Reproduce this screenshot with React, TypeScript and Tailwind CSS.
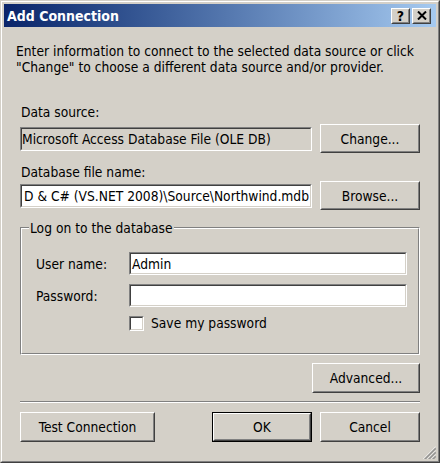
import React from "react";

const FONT = "font-['DejaVu_Sans_Condensed','DejaVu_Sans',sans-serif]";

function Raised({ className = "", children, isDefault = false }: { className?: string; children?: React.ReactNode; isDefault?: boolean }) {
  const inner = (
    <div className="h-full w-full border border-t-white border-l-white border-b-[#404040] border-r-[#404040]">
      <div className="h-full w-full border border-t-[#d4d0c8] border-l-[#d4d0c8] border-b-[#808080] border-r-[#808080] flex items-center justify-center">
        {children}
      </div>
    </div>
  );
  if (isDefault) {
    return <div className={`border border-black ${className}`}>{inner}</div>;
  }
  return <div className={className}>{inner}</div>;
}

function Sunken({ className = "", innerClass = "bg-white", children }: { className?: string; innerClass?: string; children?: React.ReactNode }) {
  return (
    <div className={`border border-t-[#808080] border-l-[#808080] border-b-white border-r-white ${className}`}>
      <div className={`h-full w-full border border-t-[#404040] border-l-[#404040] border-b-[#d4d0c8] border-r-[#d4d0c8] overflow-hidden flex items-center ${innerClass}`}>
        {children}
      </div>
    </div>
  );
}

function Grip() {
  return (
    <svg className="absolute right-0 bottom-0" width="13" height="13" viewBox="0 0 13 13">
      {[0, 4, 8].map((k) => (
        <g key={k}>
          <line x1={13} y1={k + 0.5} x2={k + 0.5} y2={13} stroke="#ffffff" strokeWidth="1" />
          <line x1={13} y1={k + 1.5} x2={k + 1.5} y2={13} stroke="#808080" strokeWidth="1" />
          <line x1={13} y1={k + 2.5} x2={k + 2.5} y2={13} stroke="#808080" strokeWidth="1" />
        </g>
      ))}
    </svg>
  );
}

export default function App() {
  return (
    <div className={`w-[440px] h-[463px] bg-[#d4d0c8] border border-t-[#d4d0c8] border-l-[#d4d0c8] border-b-[#404040] border-r-[#404040] ${FONT} text-[13.7px] leading-[16px] text-black`}>
      <div className="h-full border border-t-white border-l-white border-b-[#808080] border-r-[#808080] p-[2px] flex flex-col">
        {/* Title bar */}
        <div className="h-[23px] flex items-center justify-between pl-[3px] pr-[5px] bg-gradient-to-r from-[#0a246a] to-[#a6caf0]">
          <span className="text-white font-bold text-[14px] leading-[16px]">Add Connection</span>
          <div className="flex gap-[2px]">
            <Raised className="w-[19px] h-[16px] bg-[#d4d0c8]">
              <span className="font-bold text-[14px] leading-[12px] text-black">?</span>
            </Raised>
            <Raised className="w-[19px] h-[16px] bg-[#d4d0c8]">
              <svg width="10" height="9" viewBox="0 0 10 9">
                <path d="M1 0.5 L9 8.5 M9 0.5 L1 8.5" stroke="#000" strokeWidth="2" />
              </svg>
            </Raised>
          </div>
        </div>

        {/* Content */}
        <div className="relative flex-1 flex flex-col px-[16px]">
          <p className="mt-[16px] -ml-[4px] whitespace-nowrap">
            Enter information to connect to the selected data source or click
            <br />
            "Change" to choose a different data source and/or provider.
          </p>

          <div className="mt-[29px] ml-[1px]">Data source:</div>
          <div className="mt-[4px] flex items-center gap-[8px]">
            <Sunken className="w-[292px] h-[24px]" innerClass="bg-[#d4d0c8]">
              <span className="whitespace-nowrap">Microsoft Access Database File (OLE DB)</span>
            </Sunken>
            <Raised className="w-[100px] h-[29px]">Change...</Raised>
          </div>

          <div className="mt-[11px] ml-[1px]">Database file name:</div>
          <div className="mt-[1px] flex items-center gap-[8px]">
            <Sunken className="w-[292px] h-[24px]" innerClass="bg-white justify-end pr-[1px]">
              <span className="whitespace-nowrap">D &amp; C# (VS.NET 2008)\Source\Northwind.mdb</span>
            </Sunken>
            <Raised className="w-[100px] h-[29px]">Browse...</Raised>
          </div>

          {/* Group box */}
          <div className="relative mt-[17px] h-[128px] border border-t-[#808080] border-l-[#808080] border-b-white border-r-white">
            <div className="h-full border border-t-white border-l-white border-b-[#808080] border-r-[#808080] flex flex-col pt-[23px] pl-[14px] pr-[11px]">
              <div className="flex items-center">
                <span className="w-[93px]">User name:</span>
                <Sunken className="flex-1 h-[23px]" innerClass="bg-white pl-[1px]">
                  <span>Admin</span>
                </Sunken>
              </div>
              <div className="mt-[9px] flex items-center">
                <span className="w-[93px]">Password:</span>
                <Sunken className="flex-1 h-[23px]" innerClass="bg-white" />
              </div>
              <div className="mt-[8px] flex items-center ml-[93px]">
                <Sunken className="w-[15px] h-[15px]" innerClass="bg-white" />
                <span className="ml-[7px]">Save my password</span>
              </div>
            </div>
            <span className="absolute -top-[8px] left-[8px] px-[1px] bg-[#d4d0c8]">Log on to the database</span>
          </div>

          <Raised className="mt-[8px] self-end w-[108px] h-[30px]">Advanced...</Raised>

          <div className="mt-[8px] h-[2px] border-t border-t-[#808080] border-b border-b-white" />

          <div className="mt-[9px] flex items-center">
            <Raised className="w-[135px] h-[30px]">Test Connection</Raised>
            <Raised isDefault className="ml-auto w-[100px] h-[30px]">OK</Raised>
            <Raised className="ml-[8px] w-[100px] h-[30px]">Cancel</Raised>
          </div>

          <Grip />
        </div>
      </div>
    </div>
  );
}
